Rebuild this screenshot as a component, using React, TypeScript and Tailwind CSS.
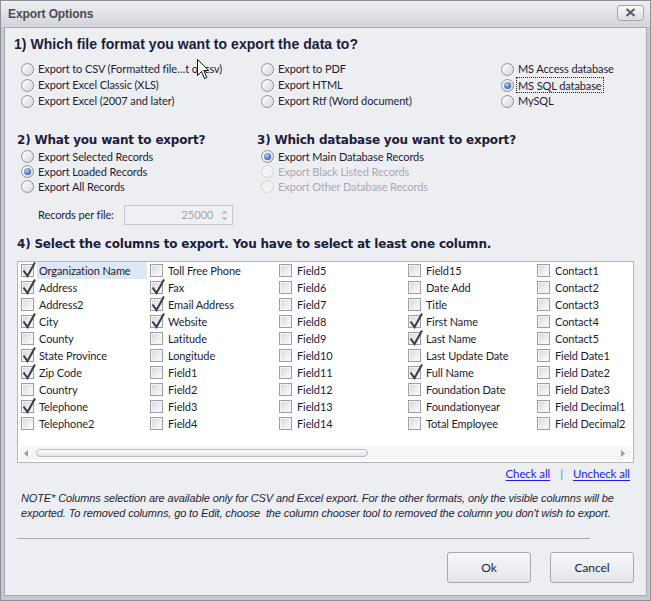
import React from "react";

function Radio({ checked = false, disabled = false }: { checked?: boolean; disabled?: boolean }) {
  return (
    <span
      className={
        disabled
          ? "inline-flex w-[13px] h-[13px] rounded-full border border-[#d3d4d9] bg-[#f1f2f4] items-center justify-center shrink-0"
          : "inline-flex w-[13px] h-[13px] rounded-full border border-[#8f919b] bg-linear-to-br from-[#ffffff] to-[#d6d8de] items-center justify-center shrink-0"
      }
    >
      {checked && (
        <span className="w-[7px] h-[7px] rounded-full bg-[radial-gradient(circle_at_40%_35%,#b6d0f7,#3a66c9_70%,#2a4fa8)]" />
      )}
    </span>
  );
}

function RadioRow({
  label,
  checked = false,
  disabled = false,
  focus = false,
  h = "h-[16px]",
}: {
  label: string;
  checked?: boolean;
  disabled?: boolean;
  focus?: boolean;
  h?: string;
}) {
  return (
    <div className={"flex items-center gap-[4px] whitespace-nowrap " + h}>
      <Radio checked={checked} disabled={disabled} />
      <span
        className={
          "pt-[1px] " +
          (disabled ? "text-[#a9aab2]" : "text-[#1c1c36]") +
          (focus ? " outline outline-1 outline-dotted outline-[#222] px-[1px] -ml-[1px] leading-[13px]" : "")
        }
      >
        {label}
      </span>
    </div>
  );
}

function Check({ checked }: { checked: boolean }) {
  return (
    <span className="relative w-[13px] h-[13px] border border-[#9c9ea8] bg-[#f4f4f6] shrink-0">
      <span className="absolute inset-[1px] bg-linear-to-br from-[#d9dae0] to-[#fbfbfc]" />
      {checked && (
        <svg className="absolute left-[0px] top-[-4px]" width="15" height="17" viewBox="0 0 15 17">
          <path d="M1.5 9.5 L5.5 15 L13 1.5" stroke="#3d3e48" strokeWidth="2.1" fill="none" strokeLinejoin="miter" />
        </svg>
      )}
    </span>
  );
}

const columns: [string, boolean][][] = [
  [
    ["Organization Name", true],
    ["Address", true],
    ["Address2", false],
    ["City", true],
    ["County", false],
    ["State Province", true],
    ["Zip Code", true],
    ["Country", false],
    ["Telephone", true],
    ["Telephone2", false],
  ],
  [
    ["Toll Free Phone", false],
    ["Fax", true],
    ["Email Address", true],
    ["Website", true],
    ["Latitude", false],
    ["Longitude", false],
    ["Field1", false],
    ["Field2", false],
    ["Field3", false],
    ["Field4", false],
  ],
  [
    ["Field5", false],
    ["Field6", false],
    ["Field7", false],
    ["Field8", false],
    ["Field9", false],
    ["Field10", false],
    ["Field11", false],
    ["Field12", false],
    ["Field13", false],
    ["Field14", false],
  ],
  [
    ["Field15", false],
    ["Date Add", false],
    ["Title", false],
    ["First Name", true],
    ["Last Name", true],
    ["Last Update Date", false],
    ["Full Name", true],
    ["Foundation Date", false],
    ["Foundationyear", false],
    ["Total Employee", false],
  ],
  [
    ["Contact1", false],
    ["Contact2", false],
    ["Contact3", false],
    ["Contact4", false],
    ["Contact5", false],
    ["Field Date1", false],
    ["Field Date2", false],
    ["Field Date3", false],
    ["Field Decimal1", false],
    ["Field Decimal2", false],
  ],
];

export default function App() {
  const rows = Array.from({ length: 10 }, (_, r) => columns.map((c) => c[r]));
  return (
    <div className="relative w-[651px] h-[601px] border border-[#8e909a] bg-[#c6c8cf] flex flex-col overflow-hidden font-['Lato','Open_Sans',sans-serif] text-[11px] tracking-[-0.1px] text-[#1c1c36]">
      {/* Title bar */}
      <div className="h-[26px] shrink-0 flex items-center justify-between pl-[7px] pr-[6px] bg-linear-to-b from-[#eeeff2] to-[#d2d4da]">
        <span className="font-['Liberation_Sans',sans-serif] font-bold text-[12px] text-[#4a4b55] tracking-[-0.1px]">
          Export Options
        </span>
        <div className="w-[27px] h-[16px] mb-[3px] rounded-[3px] border border-[#a4a6b0] bg-linear-to-b from-[#f8f8fa] to-[#dcdde2] flex items-center justify-center">
          <svg width="11" height="9" viewBox="0 0 11 9">
            <path d="M1.5 1 L9.5 8 M9.5 1 L1.5 8" stroke="#5a5b66" strokeWidth="2.2" />
          </svg>
        </div>
      </div>

      {/* Content */}
      <div className="flex-1 mx-[3px] mb-[4px] border border-[#a8aab3] bg-[#edeef2] flex flex-col">
        {/* Section 1 */}
        <div className="mt-[7px] ml-[9px] h-[18px] flex items-center font-['Liberation_Sans',sans-serif] font-bold text-[14px] text-[#1c1c3c] tracking-[0.05px] whitespace-nowrap">
          1) Which file format you want to export the data to?
        </div>
        <div className="mt-[8px] pl-[16px] flex">
          <div className="w-[240px] shrink-0 flex flex-col">
            <RadioRow label="Export to CSV (Formatted file…t or csv)" />
            <RadioRow label="Export Excel Classic (XLS)" />
            <RadioRow label="Export Excel (2007 and later)" />
          </div>
          <div className="w-[240px] shrink-0 flex flex-col">
            <RadioRow label="Export to PDF" />
            <RadioRow label="Export HTML" />
            <RadioRow label="Export Rtf (Word document)" />
          </div>
          <div className="flex flex-col">
            <RadioRow label="MS Access database" />
            <RadioRow label="MS SQL database" checked focus />
            <RadioRow label="MySQL" />
          </div>
        </div>

        {/* Sections 2 & 3 */}
        <div className="mt-[22px] pl-[12px] flex">
          <div className="w-[240px] shrink-0 flex flex-col">
            <div className="h-[18px] flex items-center font-['DejaVu_Sans',sans-serif] font-bold text-[12px] text-[#1c1c3c] tracking-[-0.2px] whitespace-nowrap">
              2) What you want to export?
            </div>
            <div className="pl-[4px] flex flex-col">
              <RadioRow label="Export Selected Records" h="h-[15px]" />
              <RadioRow label="Export Loaded Records" checked h="h-[15px]" />
              <RadioRow label="Export All Records" h="h-[15px]" />
            </div>
          </div>
          <div className="flex flex-col">
            <div className="h-[18px] flex items-center font-['DejaVu_Sans',sans-serif] font-bold text-[12px] text-[#1c1c3c] tracking-[-0.2px] whitespace-nowrap">
              3) Which database you want to export?
            </div>
            <div className="pl-[4px] flex flex-col">
              <RadioRow label="Export Main Database Records" checked h="h-[15px]" />
              <RadioRow label="Export Black Listed Records" disabled h="h-[15px]" />
              <RadioRow label="Export Other Database Records" disabled h="h-[15px]" />
            </div>
          </div>
        </div>

        {/* Records per file */}
        <div className="mt-[11px] pl-[33px] h-[20px] flex items-center">
          <span className="w-[86px] shrink-0 whitespace-nowrap pt-[1px]">Records per file:</span>
          <div className="w-[109px] h-[20px] shrink-0 border border-[#c5c7cf] bg-[#eff0f3] flex items-center justify-end">
            <span className="text-[#a4a5ad] mr-[6px] pt-[1px]">25000</span>
            <div className="w-[11px] h-full flex flex-col items-center justify-center gap-[3px] mr-[2px]">
              <svg width="7" height="4" viewBox="0 0 7 4">
                <path d="M0.5 3.5 L3.5 0.5 L6.5 3.5 Z" fill="#b6b7be" />
              </svg>
              <svg width="7" height="4" viewBox="0 0 7 4">
                <path d="M0.5 0.5 L3.5 3.5 L6.5 0.5 Z" fill="#b6b7be" />
              </svg>
            </div>
          </div>
        </div>

        {/* Section 4 */}
        <div className="mt-[10px] ml-[12px] h-[18px] flex items-center font-['DejaVu_Sans',sans-serif] font-bold text-[12px] text-[#1c1c3c] tracking-[-0.2px] whitespace-nowrap">
          4) Select the columns to export. You have to select at least one column.
        </div>

        <div className="mt-[8px] ml-[12px] w-[617px] h-[202px] border border-[#b4b6be] bg-white flex flex-col overflow-hidden">
          <div className="pl-[3px] flex flex-col">
            {rows.map((row, r) => (
              <div key={r} className="h-[17px] flex">
                {row.map(([label, checked], c) => (
                  <div key={c} className="w-[129px] shrink-0 flex items-center whitespace-nowrap">
                    <Check checked={checked} />
                    <span
                      className={
                        "h-[17px] flex items-center ml-[3px] pl-[2px] pt-[2px] " +
                        (r === 0 && c === 0 ? "bg-[#dde7f5] w-[110px]" : "")
                      }
                    >
                      {label}
                    </span>
                  </div>
                ))}
              </div>
            ))}
          </div>
          <div className="mt-auto mb-[2px] mx-[2px] h-[14px] bg-[#f6f6f8] flex items-center">
            <svg className="ml-[4px]" width="4" height="7" viewBox="0 0 4 7">
              <path d="M4 0 L0 3.5 L4 7 Z" fill="#9a9ba3" />
            </svg>
            <div className="ml-[8px] w-[332px] h-[8px] rounded-full border border-[#b9bbc3] bg-linear-to-b from-[#fbfbfc] to-[#e3e4e8]" />
            <svg className="ml-auto mr-[6px]" width="4" height="7" viewBox="0 0 4 7">
              <path d="M0 0 L4 3.5 L0 7 Z" fill="#9a9ba3" />
            </svg>
          </div>
        </div>

        {/* Links */}
        <div className="mt-[3px] w-[625px] h-[16px] flex items-center justify-end text-[11.5px]">
          <span className="text-[#1d1df0] underline underline-offset-[2px]">Check all</span>
          <span className="mx-[10px] text-[#4a86d0]">|</span>
          <span className="text-[#1d1df0] underline underline-offset-[2px]">Uncheck all</span>
        </div>

        {/* Note */}
        <div className="mt-[9px] ml-[16px] font-['Liberation_Sans',sans-serif] italic text-[11px] leading-[15px] text-[#1e1e3a] tracking-[-0.12px] whitespace-nowrap">
          NOTE* Columns selection are available only for CSV and Excel export. For the other formats, only the visible columns will be
          <br />
          exported. To removed columns, go to Edit, choose{"\u00a0"} the column chooser tool to removed the column you don&apos;t wish to export.
        </div>

        <div className="mt-[17px] ml-[12px] w-[573px] h-px bg-[#a9abb2]" />

        <div className="mt-[13px] flex justify-end pr-[12px] gap-[19px]">
          <div className="w-[84px] h-[31px] rounded-[3px] border border-[#a6a8b1] bg-linear-to-b from-[#f5f6f8] to-[#e5e6ea] flex items-center justify-center text-[12px] text-[#1c1c36]">
            Ok
          </div>
          <div className="w-[84px] h-[31px] rounded-[3px] border border-[#a6a8b1] bg-linear-to-b from-[#f5f6f8] to-[#e5e6ea] flex items-center justify-center text-[12px] text-[#1c1c36]">
            Cancel
          </div>
        </div>
      </div>

      {/* Mouse cursor overlay */}
      <svg className="absolute left-[196px] top-[58px]" width="13" height="21" viewBox="0 0 13 21">
        <path d="M0.5 0.5 L0.5 16.5 L4.5 12.5 L7.5 19.5 L9.8 18.5 L6.8 11.5 L11.8 11.5 Z" fill="#fff" stroke="#111" strokeWidth="1" strokeLinejoin="miter" />
      </svg>
    </div>
  );
}
